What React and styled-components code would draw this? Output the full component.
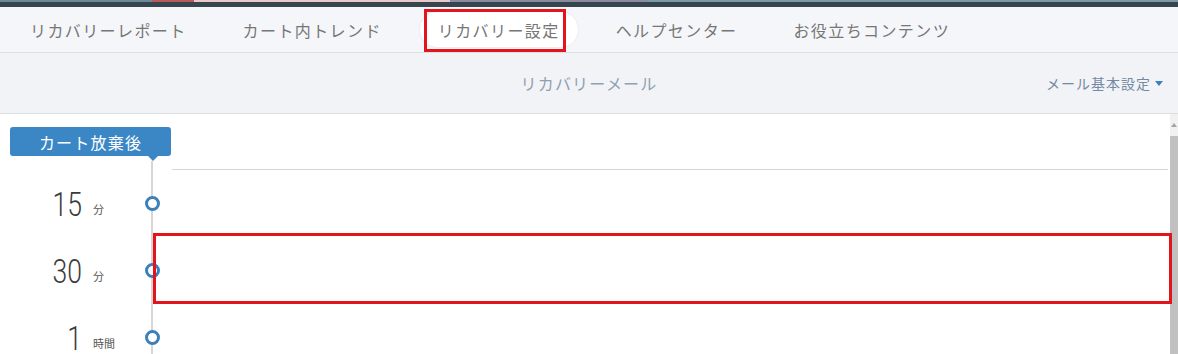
import React from "react";
import styled, { createGlobalStyle } from "styled-components";

const GlobalStyle = createGlobalStyle`
  html, body {
    margin: 0;
    padding: 0;
    overflow: hidden;
    background: #fff;
  }
  body {
    font-family: "Noto Sans CJK JP", "Noto Sans", sans-serif;
  }
`;

const Page = styled.div`
  width: 1178px;
  height: 354px;
  overflow: hidden;
  display: flex;
  flex-direction: column;
`;

const TopBar = styled.div`
  height: 7px;
  flex: none;
  background: #36454e;
  border-top: 2px solid transparent;
  box-sizing: border-box;
  border-image: linear-gradient(
      to right,
      #6d8896 0 153px,
      #b85a5a 153px 195px,
      #e9c9c9 195px 450px,
      #8c8aa0 450px 647px,
      #7d98a6 647px
    )
    1;
`;

const TabBar = styled.nav`
  height: 46px;
  flex: none;
  box-sizing: border-box;
  display: flex;
  align-items: center;
  gap: 18px;
  padding-left: 11px;
  background: #f5f6f9;
  border-bottom: 1px solid #dcdee2;
`;

const Tab = styled.div`
  position: relative;
  height: 37px;
  box-sizing: border-box;
  display: flex;
  align-items: center;
  padding: 1px 18px 0;
  border-radius: 19px;
  font-size: 16px;
  letter-spacing: 1.4px;
  color: #767676;
  background: ${(props) => (props.$active ? "#fff" : "transparent")};
  border: 1px solid ${(props) => (props.$active ? "#ececef" : "transparent")};
`;

const TabMark = styled.span`
  position: absolute;
  left: 4px;
  right: 12px;
  top: -3px;
  bottom: -5px;
  border: 3px solid #e3141b;
`;

const SubHeader = styled.div`
  height: 61px;
  flex: none;
  box-sizing: border-box;
  display: grid;
  grid-template-columns: 1fr auto 1fr;
  align-items: center;
  background: #f2f3f6;
  border-bottom: 1px solid #dcdee2;
`;

const SubTitle = styled.div`
  grid-column: 2;
  font-size: 16px;
  letter-spacing: 1.2px;
  color: #909fb3;
`;

const SettingsMenu = styled.div`
  grid-column: 3;
  justify-self: end;
  display: flex;
  align-items: center;
  gap: 4px;
  padding-right: 15px;
  font-size: 14px;
  letter-spacing: 1px;
  color: #7389a4;
`;

const Caret = styled.span`
  width: 0;
  height: 0;
  border-left: 4px solid transparent;
  border-right: 4px solid transparent;
  border-top: 5px solid #3a7fc0;
`;

const Content = styled.div`
  flex: 1;
  display: flex;
  min-height: 0;
`;

const Main = styled.div`
  flex: 1;
`;

const BadgeRow = styled.div`
  padding: 13px 0 5px 10px;
`;

const Badge = styled.div`
  position: relative;
  width: 161px;
  height: 29px;
  border-radius: 3px;
  background: #3b87c6;
  color: #fff;
  font-size: 16px;
  letter-spacing: 1.2px;
  display: flex;
  align-items: center;
  justify-content: center;

  &::after {
    content: "";
    position: absolute;
    left: 138px;
    bottom: -5px;
    border-left: 5px solid transparent;
    border-right: 5px solid transparent;
    border-top: 5px solid #3b87c6;
  }
`;

const Timeline = styled.div`
  padding-top: 8px;
  background: linear-gradient(#d6d6d6, #d6d6d6) 151px 0 / 2px 100% no-repeat;
`;

const TopRule = styled.div`
  margin: 0 2px 0 172px;
  border-top: 1px solid #d5d5d5;
`;

const Row = styled.div`
  display: flex;
  align-items: center;
  height: 67px;
`;

const Label = styled.div`
  width: 145px;
  flex: none;
  display: flex;
  align-items: baseline;
`;

const Num = styled.span`
  width: 82px;
  text-align: right;
  font-family: Roboto, "Liberation Sans", sans-serif;
  font-weight: 300;
  font-size: 34px;
  line-height: 1;
  color: #3b3b3b;
  transform: scaleX(0.78);
  transform-origin: right center;
`;

const Unit = styled.span`
  margin-left: 11px;
  position: relative;
  top: -2px;
  font-size: 11px;
  color: #555;
`;

const Node = styled.span`
  position: relative;
  z-index: 2;
  flex: none;
  width: 15px;
  height: 15px;
  box-sizing: border-box;
  border: 3px solid #3c80b9;
  border-radius: 50%;
  background: #fff;
`;

const Slot = styled.div`
  position: relative;
  flex: 1;
  align-self: stretch;
  margin-left: -7px;
`;

const RedFrame = styled.span`
  position: absolute;
  z-index: 3;
  left: 0;
  right: -2px;
  top: -4px;
  bottom: 0;
  border: 3px solid #e3141b;
`;

const Scrollbar = styled.div`
  width: 8px;
  flex: none;
  display: flex;
  flex-direction: column;
  background: #f1f1f1;
`;

const ScrollArrow = styled.div`
  height: 22px;
  flex: none;
  display: flex;
  align-items: center;
  justify-content: center;

  &::before {
    content: "";
    border-left: 3px solid transparent;
    border-right: 3px solid transparent;
    border-bottom: 4px solid #a3a3a3;
  }
`;

const Thumb = styled.div`
  flex: 1;
  background: #c1c1c1;
`;

const tabs = [
  "リカバリーレポート",
  "カート内トレンド",
  "リカバリー設定",
  "ヘルプセンター",
  "お役立ちコンテンツ",
];

const steps = [
  { num: "15", unit: "分" },
  { num: "30", unit: "分", marked: true },
  { num: "1", unit: "時間" },
];

export default function App() {
  return (
    <>
      <GlobalStyle />
      <Page>
        <TopBar />
        <TabBar>
          {tabs.map((name, i) => (
            <Tab key={name} $active={i === 2}>
              {name}
              {i === 2 && <TabMark />}
            </Tab>
          ))}
        </TabBar>
        <SubHeader>
          <SubTitle>リカバリーメール</SubTitle>
          <SettingsMenu>
            メール基本設定
            <Caret />
          </SettingsMenu>
        </SubHeader>
        <Content>
          <Main>
            <BadgeRow>
              <Badge>カート放棄後</Badge>
            </BadgeRow>
            <Timeline>
              <TopRule />
              {steps.map((step) => (
                <Row key={step.num}>
                  <Label>
                    <Num>{step.num}</Num>
                    <Unit>{step.unit}</Unit>
                  </Label>
                  <Node />
                  <Slot>{step.marked && <RedFrame />}</Slot>
                </Row>
              ))}
            </Timeline>
          </Main>
          <Scrollbar>
            <ScrollArrow />
            <Thumb />
          </Scrollbar>
        </Content>
      </Page>
    </>
  );
}
